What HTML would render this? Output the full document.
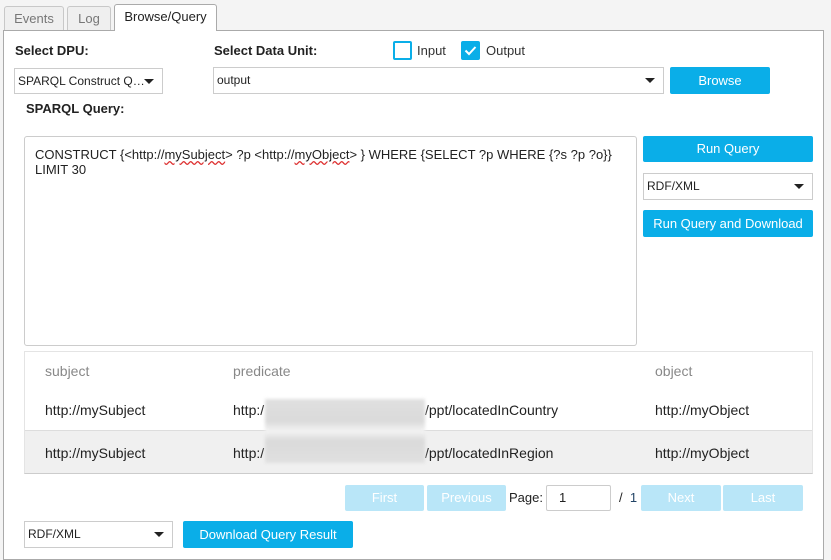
<!DOCTYPE html>
<html><head><meta charset="utf-8"><style>
*{box-sizing:border-box}
body{margin:0;width:831px;height:551px;background:#f4f4f4;font-family:"Liberation Sans",Arial,sans-serif;font-size:13px;color:#222;position:relative;overflow:hidden}
.a{position:absolute}
.tab{position:absolute;border:1px solid #c8c8c8;border-bottom:none;border-radius:3px 3px 0 0;background:#efefef;color:#777;font-size:13px;text-align:center}
.panel{position:absolute;left:3px;top:30px;width:821px;height:530px;background:#fff;border:1px solid #aaa}
.lbl{position:absolute;font-weight:bold;font-size:13px;color:#222}
.sel{position:absolute;border:1px solid #ccc;background:#fff;font-size:12px;padding-left:3px;line-height:24px;color:#222}
.sel:after{content:"";position:absolute;right:8px;top:10px;border-left:5px solid transparent;border-right:5px solid transparent;border-top:5px solid #222}
.btn{position:absolute;background:#0aaee8;color:#fff;text-align:center;font-size:13px;border-radius:2px}
.pb{position:absolute;background:#b9e6f8;color:#fff;text-align:center;font-size:13px;line-height:26px;top:485px;height:26px;width:50px;border-radius:2px}
</style></head><body>
<div class="tab" style="left:4px;top:6px;width:60px;height:25px;line-height:24px">Events</div>
<div class="tab" style="left:67px;top:6px;width:44px;height:25px;line-height:24px">Log</div>
<div class="panel"></div>
<div class="tab" style="left:114px;top:4px;width:103px;height:27px;line-height:24px;background:#fff;color:#222;border-color:#aaa">Browse/Query</div>
<div class="lbl" style="left:15px;top:43px">Select DPU:</div>
<div class="lbl" style="left:214px;top:43px">Select Data Unit:</div>
<div class="a" style="left:393px;top:41px;width:19px;height:19px;border:2px solid #0aaee8;border-radius:2px"></div>
<div class="a" style="left:417px;top:43px;color:#333">Input</div>
<div class="a" style="left:461px;top:41px;width:19px;height:19px;background:#0aaee8;border-radius:2px"><svg width="19" height="19"><path d="M4.5 9.5l3.5 3.5 6.5-7" stroke="#fff" stroke-width="2" fill="none"/></svg></div>
<div class="a" style="left:486px;top:43px;color:#333">Output</div>
<div class="sel" style="left:14px;top:68px;width:149px;height:26px">SPARQL Construct Q…</div>
<div class="sel" style="left:213px;top:67px;width:451px;height:27px">output</div>
<div class="btn" style="left:670px;top:67px;width:100px;height:27px;line-height:27px">Browse</div>
<div class="lbl" style="left:26px;top:101px">SPARQL Query:</div>
<div class="a" style="left:24px;top:136px;width:613px;height:210px;border:1px solid #ccc;border-radius:3px;padding:10px;font-size:13px;line-height:15px;color:#222">CONSTRUCT {&lt;http://<span style="text-decoration:underline wavy #d33">mySubject</span>&gt; ?p &lt;http://<span style="text-decoration:underline wavy #d33">myObject</span>&gt; } WHERE {SELECT ?p WHERE {?s ?p ?o}}<br>LIMIT 30</div>
<div class="btn" style="left:643px;top:136px;width:170px;height:26px;line-height:26px">Run Query</div>
<div class="sel" style="left:643px;top:173px;width:170px;height:27px">RDF/XML</div>
<div class="btn" style="left:643px;top:210px;width:170px;height:27px;line-height:27px">Run Query and Download</div>
<div class="a" style="left:24px;top:351px;width:789px;height:123px;border:1px solid #e4e4e4;border-bottom:1px solid #ccc"></div>
<div class="a" style="left:25px;top:430px;width:787px;height:43px;background:#f0f0f0;border-top:1px solid #ddd"></div>
<div class="a" style="left:45px;top:363px;color:#888;font-size:14px">subject</div>
<div class="a" style="left:233px;top:363px;color:#888;font-size:14px">predicate</div>
<div class="a" style="left:655px;top:363px;color:#888;font-size:14px">object</div>
<div class="a" style="left:45px;top:402px;font-size:14px">http://mySubject</div>
<div class="a" style="left:233px;top:402px;font-size:14px">http:/</div>
<div class="a" style="left:425px;top:402px;font-size:14px">/ppt/locatedInCountry</div>
<div class="a" style="left:655px;top:402px;font-size:14px">http://myObject</div>
<div class="a" style="left:45px;top:445px;font-size:14px">http://mySubject</div>
<div class="a" style="left:233px;top:445px;font-size:14px">http:/</div>
<div class="a" style="left:425px;top:445px;font-size:14px">/ppt/locatedInRegion</div>
<div class="a" style="left:655px;top:445px;font-size:14px">http://myObject</div>
<div class="a" style="left:265px;top:399px;width:160px;height:64px;background:linear-gradient(#e0e0e0 0,#dadada 35%,#f4f4f4 50%,#dadada 65%,#e0e0e0 100%);filter:blur(1.5px)"></div>
<div class="pb" style="left:345px;width:79px">First</div>
<div class="pb" style="left:427px;width:79px">Previous</div>
<div class="a" style="left:509px;top:490px;font-size:13px">Page:</div>
<div class="a" style="left:546px;top:485px;width:65px;height:26px;border:1px solid #ccc;border-radius:2px;padding-left:12px;line-height:24px">1</div>
<div class="a" style="left:619px;top:490px">/ &nbsp;<span style="color:#246">1</span></div>
<div class="pb" style="left:641px;width:80px">Next</div>
<div class="pb" style="left:723px;width:80px">Last</div>
<div class="sel" style="left:24px;top:521px;width:149px;height:27px">RDF/XML</div>
<div class="btn" style="left:183px;top:521px;width:170px;height:27px;line-height:27px">Download Query Result</div>
</body></html>
